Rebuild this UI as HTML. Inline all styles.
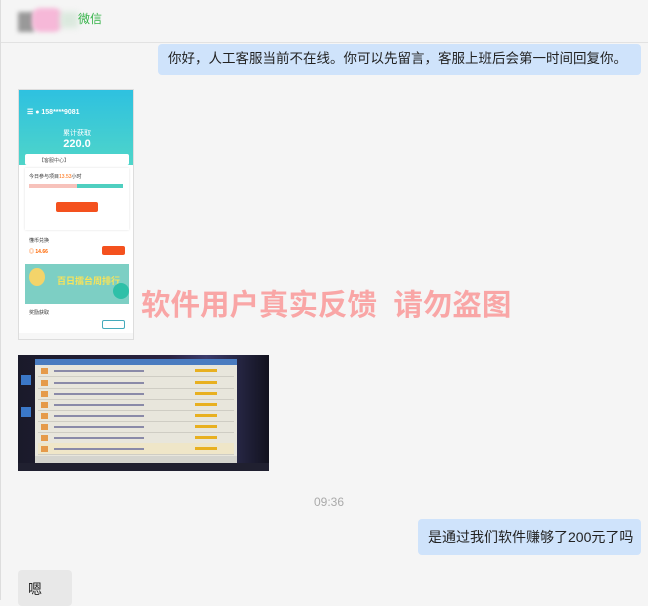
<!DOCTYPE html>
<html><head><meta charset="utf-8"><style>
*{margin:0;padding:0;box-sizing:border-box}
body{width:648px;height:600px;background:#f5f5f5;font-family:"Liberation Sans","Noto Sans CJK SC",sans-serif;position:relative;overflow:hidden}
.a{position:absolute}
.bub{position:absolute;background:#cfe3fb;border-radius:4px;font-size:14px;color:#222;line-height:20px;padding:6px 10px;white-space:nowrap}
.row{position:absolute;left:20px;width:196px;height:12px;border-bottom:1px solid #cfcdc4}
.row i{position:absolute;left:3px;top:3px;width:7px;height:6px;background:#e59a4a}
.row b{position:absolute;left:16px;top:5px;width:90px;height:2px;background:#8a8aa8}
.row s{position:absolute;left:157px;top:4px;width:22px;height:3px;background:#e8b020}
</style></head><body>
<div class="a" style="left:0;top:0;width:648px;height:43px;background:#f5f5f5;border-bottom:1px solid #e2e2e2"></div>
<div class="a" style="left:0;top:0;width:1px;height:600px;background:#ddd"></div>
<div class="a" style="left:18px;top:12px;width:16px;height:20px;background:#999;filter:blur(2px)"></div>
<div class="a" style="left:32px;top:8px;width:30px;height:24px;background:#f6b8d8;border-radius:8px;filter:blur(2px)"></div>
<div class="a" style="left:60px;top:12px;width:18px;height:16px;background:#dbe9de;filter:blur(3px)"></div>
<div class="a" style="left:78px;top:10px;font-size:12px;color:#37b34a">微信</div>

<div class="bub" style="left:158px;top:44px;width:483px;height:31px;padding:5px 10px;font-size:13.5px">你好，人工客服当前不在线。你可以先留言，客服上班后会第一时间回复你。</div>

<!-- phone screenshot -->
<div class="a" style="left:18px;top:89px;width:116px;height:251px;background:#fff;border:1px solid #ddd;overflow:hidden">
 <div class="a" style="left:0;top:0;width:116px;height:75px;background:linear-gradient(#2ec1e0,#4fd5c9)"></div>
 <div class="a" style="left:8px;top:18px;font-size:7px;color:#fff;font-weight:bold">☰ ● 158****9081</div>
 <div class="a" style="left:0;top:38px;width:116px;text-align:center;font-size:7px;color:#fff">累计获取</div>
 <div class="a" style="left:0;top:48px;width:116px;text-align:center;font-size:11px;color:#fff;font-weight:bold">220.0</div>
 <div class="a" style="left:6px;top:64px;width:104px;height:11px;background:#fff;border-radius:2px;font-size:5px;color:#555;padding:3px 0 0 14px">【客服中心】</div>
 <div class="a" style="left:6px;top:78px;width:104px;height:62px;background:#fff;box-shadow:0 0 2px #ddd"></div>
 <div class="a" style="left:10px;top:83px;font-size:5px;color:#333">今日参与项目<span style="color:#f60">13.53</span>小时</div>
 <div class="a" style="left:10px;top:94px;width:48px;height:4px;background:#f7c2bb"></div>
 <div class="a" style="left:58px;top:94px;width:46px;height:4px;background:#4fcfc0"></div>
 <div class="a" style="left:37px;top:112px;width:42px;height:10px;background:#f4511e;border-radius:2px"></div>
 <div class="a" style="left:6px;top:143px;width:104px;height:28px;background:#fff"></div>
 <div class="a" style="left:10px;top:147px;font-size:5px;color:#333">懂币兑换</div>
 <div class="a" style="left:10px;top:158px;font-size:5px;color:#f60;font-weight:bold">◎ 14.66</div>
 <div class="a" style="left:83px;top:156px;width:23px;height:9px;background:#f4511e;border-radius:2px"></div>
 <div class="a" style="left:6px;top:174px;width:104px;height:40px;background:#7dcfc4"></div>
 <div class="a" style="left:10px;top:178px;width:16px;height:18px;background:#f3d46a;border-radius:50%"></div>
 <div class="a" style="left:38px;top:184px;font-size:9px;color:#f7e35a;font-weight:bold;white-space:nowrap">百日擂台周排行</div>
 <div class="a" style="left:94px;top:193px;width:16px;height:16px;background:#2ec0a8;border-radius:50%"></div>
 <div class="a" style="left:10px;top:219px;font-size:5px;color:#333">奖励获取</div>
 <div class="a" style="left:83px;top:230px;width:23px;height:9px;border:1px solid #4ab;border-radius:2px"></div>
 <div class="a" style="left:0;top:243px;width:116px;height:8px;background:#f7f7f7"></div>
</div>

<!-- photo -->
<div class="a" style="left:18px;top:355px;width:251px;height:116px;background:linear-gradient(90deg,#1a1a2a,#2a2240 60%,#3a3a6a 75%,#12121e);overflow:hidden">
 <div class="a" style="left:17px;top:4px;width:202px;height:104px;background:#e8e6dc"></div>
 <div class="a" style="left:17px;top:4px;width:202px;height:6px;background:#4a7cc0"></div>
 <div class="row" style="top:10px"><i></i><b></b><s></s></div>
 <div class="row" style="top:22px"><i></i><b></b><s></s></div>
 <div class="row" style="top:33px"><i></i><b></b><s></s></div>
 <div class="row" style="top:44px"><i></i><b></b><s></s></div>
 <div class="row" style="top:55px"><i></i><b></b><s></s></div>
 <div class="row" style="top:66px"><i></i><b></b><s></s></div>
 <div class="row" style="top:77px"><i></i><b></b><s></s></div>
 <div class="row" style="top:88px;background:#efe6c8"><i></i><b></b><s></s></div>
 <div class="a" style="left:17px;top:101px;width:202px;height:7px;background:#d4d4ce"></div>
 <div class="a" style="left:3px;top:20px;width:10px;height:10px;background:#3b78c8"></div>
 <div class="a" style="left:3px;top:52px;width:10px;height:10px;background:#3b78c8"></div>
 <div class="a" style="left:0;top:108px;width:251px;height:8px;background:#202030"></div>
</div>

<div class="a" style="left:141px;top:282px;font-size:29.5px;font-weight:bold;color:#f9a6a6;white-space:nowrap;letter-spacing:0px">软件用户真实反馈&nbsp; 请勿盗图</div>

<div class="a" style="left:314px;top:495px;font-size:12px;color:#aaa">09:36</div>
<div class="bub" style="left:418px;top:519px;width:223px;height:36px;padding:8px 10px">是通过我们软件赚够了200元了吗</div>
<div class="a" style="left:18px;top:570px;width:54px;height:36px;background:#e8e8e8;border-radius:4px;font-size:14px;padding:9px 10px;color:#222">嗯</div>
</body></html>
